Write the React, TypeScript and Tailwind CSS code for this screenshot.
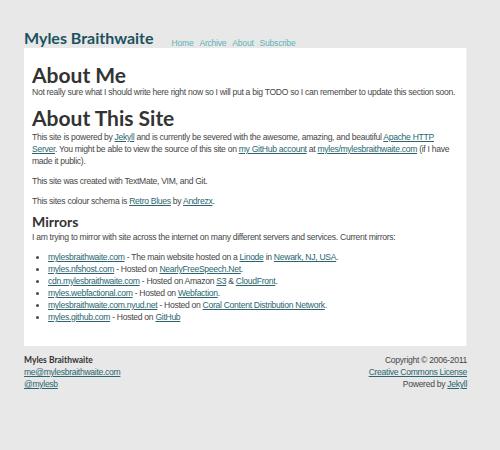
const linkCls = "text-[#2a6670] underline";

const A = ({ children }: { children: React.ReactNode }) => (
  <a href="#" className={linkCls}>
    {children}
  </a>
);

const mirrors: { host: string; rest: React.ReactNode }[] = [
  {
    host: "mylesbraithwaite.com",
    rest: (
      <>
        {" "}- The main website hosted on a <A>Linode</A> in <A>Newark, NJ, USA</A>.
      </>
    ),
  },
  {
    host: "myles.nfshost.com",
    rest: (
      <>
        {" "}- Hosted on <A>NearlyFreeSpeech.Net</A>.
      </>
    ),
  },
  {
    host: "cdn.mylesbraithwaite.com",
    rest: (
      <>
        {" "}- Hosted on Amazon <A>S3</A> &amp; <A>CloudFront</A>.
      </>
    ),
  },
  {
    host: "myles.webfactional.com",
    rest: (
      <>
        {" "}- Hosted on <A>Webfaction</A>.
      </>
    ),
  },
  {
    host: "mylesbraithwaite.com.nyud.net",
    rest: (
      <>
        {" "}- Hosted on <A>Coral Content Distribution Network</A>.
      </>
    ),
  },
  {
    host: "myles.github.com",
    rest: (
      <>
        {" "}- Hosted on <A>GitHub</A>
      </>
    ),
  },
];

const heading = "font-['Lato',sans-serif] font-bold text-[#333] tracking-normal";

export default function App() {
  return (
    <div className="min-h-[450px] bg-[#e8e8e8] font-['Liberation_Sans',Arial,sans-serif] text-[8.6px] leading-[12px] tracking-[-0.3px] text-[#474747]">
      <div className="w-[443px] ml-6 pt-[30px]">
        <header className="flex items-end mb-[2px]">
          <h1 className="font-['Lato',sans-serif] font-bold text-[16px] leading-[16px] tracking-normal text-[#1b5260]">
            Myles Braithwaite
          </h1>
          <nav className="flex gap-[6px] ml-[18px] mb-[-2px] text-[8.5px] leading-[10px] tracking-[-0.2px] text-[#5ab5b8]">
            <a href="#">Home</a>
            <a href="#">Archive</a>
            <a href="#">About</a>
            <a href="#">Subscribe</a>
          </nav>
        </header>

        <main className="bg-white border-r border-[#f0f0f0] px-2 pt-4 h-[298px]">
          <h2 className={`${heading} text-[21px] leading-[22px]`}>About Me</h2>
          <p>
            Not really sure what I should write here right now so I will put a big TODO so I can remember to update this section soon.
          </p>

          <h2 className={`${heading} text-[21px] leading-[22px] mt-[9px]`}>About This Site</h2>
          <p className="mt-[2px]">
            This site is powered by <A>Jekyll</A> and is currently be severed with the awesome, amazing, and beautiful{" "}
            <A>Apache HTTP Server</A>. You might be able to view the source of this site on <A>my GitHub account</A> at{" "}
            <A>myles/mylesbraithwaite.com</A> (if I have made it public).
          </p>
          <p className="mt-2">This site was created with TextMate, VIM, and Git.</p>
          <p className="mt-2">
            This sites colour schema is <A>Retro Blues</A> by <A>Andrezx</A>.
          </p>

          <h3 className={`${heading} text-[14px] leading-[16px] mt-[7px]`}>Mirrors</h3>
          <p className="mt-[1px]">
            I am trying to mirror with site across the internet on many different servers and services. Current mirrors:
          </p>
          <ul className="list-disc pl-4 mt-2">
            {mirrors.map((m) => (
              <li key={m.host}>
                <A>{m.host}</A>
                {m.rest}
              </li>
            ))}
          </ul>
        </main>

        <footer className="flex justify-between pt-2">
          <div>
            <div className="font-['Lato',sans-serif] font-bold text-[8.5px] tracking-normal text-[#333]">Myles Braithwaite</div>
            <div>
              <A>me@mylesbraithwaite.com</A>
            </div>
            <div>
              <A>@mylesb</A>
            </div>
          </div>
          <div className="text-right">
            <div>Copyright © 2006-2011</div>
            <div>
              <A>Creative Commons License</A>
            </div>
            <div>
              Powered by <A>Jekyll</A>
            </div>
          </div>
        </footer>
      </div>
    </div>
  );
}
